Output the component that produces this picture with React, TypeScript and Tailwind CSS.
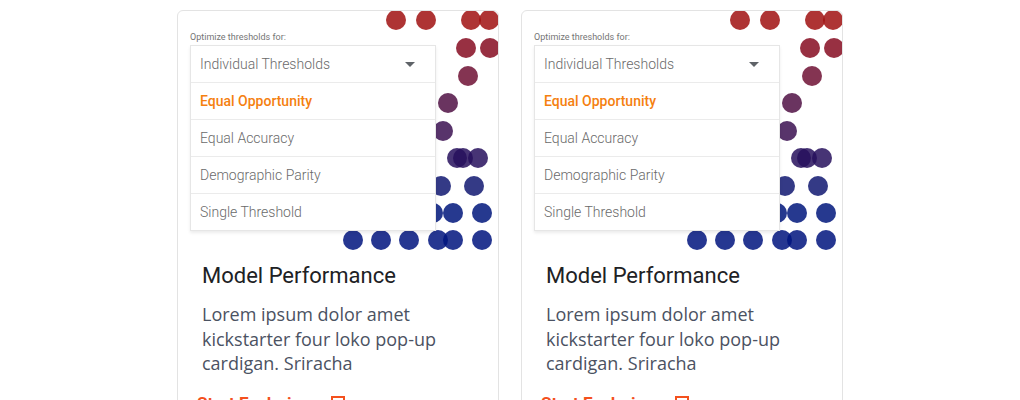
import React from "react";

type Dot = {
  x: number;
  y: number;
  color: string;
};

// dot centres are in card coordinates (inner box); colours are drawn at 85% opacity
const rows: { y: number; xs: number[]; color: string }[] = [
  { y: 9, xs: [218, 248, 293, 311], color: "rgb(160,16,16)" },
  { y: 37, xs: [288, 312], color: "rgb(134,12,33)" },
  { y: 65, xs: [290], color: "rgb(110,17,52)" },
  { y: 92, xs: [270], color: "rgb(80,16,68)" },
  { y: 120, xs: [265], color: "rgb(59,16,81)" },
  { y: 147, xs: [279, 285, 300], color: "rgb(39,17,93)" },
  { y: 175, xs: [263, 296], color: "rgb(16,23,113)" },
  { y: 202, xs: [255, 275, 304], color: "rgb(0,22,123)" },
  { y: 229, xs: [175, 203, 231, 260, 275, 304], color: "rgb(0,20,126)" },
];

const dots: Dot[] = rows.flatMap((r) => r.xs.map((x) => ({ x, y: r.y, color: r.color })));

const options = ["Equal Opportunity", "Equal Accuracy", "Demographic Parity", "Single Threshold"];

const Dots = () => (
  <svg className="absolute left-0 top-0" width="320" height="245" viewBox="0 0 320 245">
    {dots.map((d, i) => (
      <circle key={i} cx={d.x} cy={d.y} r="10" fill={d.color} fillOpacity="0.85" />
    ))}
  </svg>
);

const Dropdown = () => (
  <div className="relative pl-[12px] pt-[20px]">
    <div className="text-[9px] leading-[12px] text-[#757575] mb-[2px]">Optimize thresholds for:</div>
    <div className="w-[246px] bg-white border border-[#e6e6e6] shadow-[0_2px_3px_rgba(0,0,0,0.08)]">
      <div className="h-[36px] flex items-center justify-between pl-[9px] pr-[20px] text-[14px] font-light text-[#6a6a6a]">
        <span>Individual Thresholds</span>
        <svg width="10" height="5" viewBox="0 0 10 5">
          <path d="M0 0 L10 0 L5 5 Z" fill="#5f6368" />
        </svg>
      </div>
      {options.map((o, i) => (
        <div
          key={o}
          className={
            i === 0
              ? "h-[37px] flex items-center pl-[9px] border-t border-[#ebebeb] text-[14px] font-medium text-[#f5800f]"
              : "h-[37px] flex items-center pl-[9px] border-t border-[#ebebeb] text-[14px] font-light text-[#6a6a6a]"
          }
        >
          {o}
        </div>
      ))}
    </div>
  </div>
);

const Card = () => (
  <div className="w-[322px] h-[430px] shrink-0 bg-white border border-[#e3e3e3] rounded-[6px] overflow-hidden">
    <div className="relative h-[240px]">
      <Dots />
      <Dropdown />
    </div>
    <div className="px-[24px] pt-[11px]">
      <h2 className="text-[22px] leading-[28px] text-[#202124] font-['Roboto',sans-serif]">Model Performance</h2>
      <p className="mt-[12px] text-[18px] leading-[24.5px] text-[#4b5262] font-['Open_Sans',sans-serif]">
        Lorem ipsum dolor amet kickstarter four loko pop-up cardigan. Sriracha
      </p>
      <div className="mt-[15px] -ml-[5px] flex items-center gap-[20px] text-[17px] leading-[24px] font-bold text-[#f4511e]">
        <span>Start Exploring</span>
        <svg width="14" height="14" viewBox="0 0 14 14">
          <rect x="1" y="1" width="12" height="12" fill="none" stroke="#f4511e" strokeWidth="2" />
        </svg>
      </div>
    </div>
  </div>
);

const App = () => {
  return (
    <div className="w-[1020px] h-[400px] overflow-hidden bg-white font-['Roboto',sans-serif]">
      <div className="flex justify-center gap-[22px] pt-[10px]">
        <Card />
        <Card />
      </div>
    </div>
  );
};

export default App;
